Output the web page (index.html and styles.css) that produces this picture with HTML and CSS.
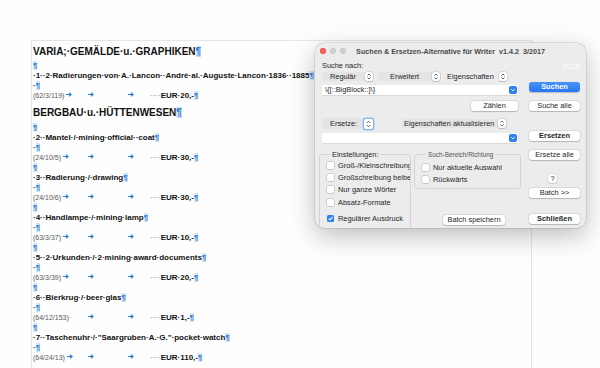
FILE: index.html
```html
<!DOCTYPE html>
<html lang="de">
<head>
<meta charset="utf-8">
<title>Suchen &amp; Ersetzen</title>
<link rel="stylesheet" href="styles.css">
</head>
<body>
<svg class="defs" width="0" height="0" aria-hidden="true">
  <symbol id="ar" viewBox="0 0 6 5"><path d="M0 2.5H4.6M3 0.7L5.2 2.5L3 4.3" fill="none" stroke="#2f7fd8" stroke-width="1.1"/></symbol>
  <symbol id="step" viewBox="0 0 8 9"><path d="M2.4 3.6L4 2L5.6 3.6M2.4 5.4L4 7L5.6 5.4" fill="none" stroke="#444" stroke-width="0.8"/></symbol>
  <symbol id="down" viewBox="0 0 8 8"><path d="M2.3 3.2L4 4.9L5.7 3.2" fill="none" stroke="#fff" stroke-width="1"/></symbol>
  <symbol id="chk" viewBox="0 0 7 7"><path d="M1.6 3.6L3 5L5.5 1.9" fill="none" stroke="#fff" stroke-width="1.1"/></symbol>
</svg>

<div class="page">
  <p class="h">VARIA;·GEMÄLDE·u.·GRAPHIKEN<span class="p">¶</span></p>
  <p class="l"><span class="p">¶</span></p>
  <p class="l b">·1··2·Radierungen·von·A.·Lancon··André·al.·Auguste·Lancon·1836··1885<span class="p">¶</span></p>
  <p class="l b">·<span class="p">¶</span></p>
  <p class="l b"><span class="t1"><span class="ref">(62/3/119)</span><svg class="ar"><use href="#ar"/></svg></span><span class="t2"><svg class="ar"><use href="#ar"/></svg></span><span class="t3"><svg class="ar"><use href="#ar"/></svg></span><span class="dots">····</span>EUR·20,-<span class="p">¶</span></p>

  <p class="h h2">BERGBAU·u.·HÜTTENWESEN<span class="p">¶</span></p>
  <p class="l"><span class="p">¶</span></p>
  <p class="l b">·2··Mantel·/·mining·official··coat<span class="p">¶</span></p>
  <p class="l b">·<span class="p">¶</span></p>
  <p class="l b"><span class="t1"><span class="ref">(24/10/5)</span><svg class="ar"><use href="#ar"/></svg></span><span class="t2"><svg class="ar"><use href="#ar"/></svg></span><span class="t3"><svg class="ar"><use href="#ar"/></svg></span><span class="dots">····</span>EUR·30,-<span class="p">¶</span></p>
  <p class="l"><span class="p">¶</span></p>
  <p class="l b">·3··Radierung·/·drawing<span class="p">¶</span></p>
  <p class="l b">·<span class="p">¶</span></p>
  <p class="l b"><span class="t1"><span class="ref">(24/10/6)</span><svg class="ar"><use href="#ar"/></svg></span><span class="t2"><svg class="ar"><use href="#ar"/></svg></span><span class="t3"><svg class="ar"><use href="#ar"/></svg></span><span class="dots">····</span>EUR·30,-<span class="p">¶</span></p>
  <p class="l"><span class="p">¶</span></p>
  <p class="l b">·4··Handlampe·/·mining·lamp<span class="p">¶</span></p>
  <p class="l b">·<span class="p">¶</span></p>
  <p class="l b"><span class="t1"><span class="ref">(63/3/37)</span><svg class="ar"><use href="#ar"/></svg></span><span class="t2"><svg class="ar"><use href="#ar"/></svg></span><span class="t3"><svg class="ar"><use href="#ar"/></svg></span><span class="dots">····</span>EUR·10,-<span class="p">¶</span></p>
  <p class="l"><span class="p">¶</span></p>
  <p class="l b">·5··2·Urkunden·/·2·mining·award·documents<span class="p">¶</span></p>
  <p class="l b">·<span class="p">¶</span></p>
  <p class="l b"><span class="t1"><span class="ref">(63/3/39)</span><svg class="ar"><use href="#ar"/></svg></span><span class="t2"><svg class="ar"><use href="#ar"/></svg></span><span class="t3"><svg class="ar"><use href="#ar"/></svg></span><span class="dots">····</span>EUR·20,-<span class="p">¶</span></p>
  <p class="l"><span class="p">¶</span></p>
  <p class="l b">·6··Bierkrug·/·beer·glas<span class="p">¶</span></p>
  <p class="l b">·<span class="p">¶</span></p>
  <p class="l b"><span class="t1"><span class="ref">(64/12/153)·</span></span><span class="t2"><svg class="ar"><use href="#ar"/></svg></span><span class="t3"><svg class="ar"><use href="#ar"/></svg></span><span class="dots">····</span>EUR·1,-<span class="p">¶</span></p>
  <p class="l"><span class="p">¶</span></p>
  <p class="l b">·7··Taschenuhr·/·"Saargruben·A.·G."·pocket·watch<span class="p">¶</span></p>
  <p class="l b">·<span class="p">¶</span></p>
  <p class="l b"><span class="t1"><span class="ref">(64/24/13)</span><svg class="ar"><use href="#ar"/></svg></span><span class="t2"><svg class="ar"><use href="#ar"/></svg></span><span class="t3"><svg class="ar"><use href="#ar"/></svg></span><span class="dots">····</span>EUR·110,-<span class="p">¶</span></p>
</div>

<div class="dialog">
  <div class="titlebar">
    <div class="lights"><i class="red"></i><i></i><i></i></div>
    <div class="title">Suchen &amp; Ersetzen-Alternative für Writer&nbsp; v1.4.2&nbsp; 3/2017</div>
  </div>
  <div class="body">
    <div class="left">
      <div class="lbl">Suche nach:</div>
      <div class="popups">
        <div class="popup p1"><span class="pt">Regulär</span><span class="st"><svg><use href="#step"/></svg></span></div>
        <div class="popup p2"><span class="pt">Erweitert</span><span class="st"><svg><use href="#step"/></svg></span></div>
        <div class="popup p3"><span class="pt">Eigenschaften</span><span class="st"><svg><use href="#step"/></svg></span></div>
      </div>
      <div class="field f1"><span class="ft">\{[::BigBlock::]\}</span><span class="dd"><svg><use href="#down"/></svg></span></div>
      <div class="rowend"><div class="btn zb">Zählen</div></div>
      <div class="erow">
        <div class="elabel">Ersetze:</div>
        <span class="st focus"><svg><use href="#step"/></svg></span>
        <div class="popup p4"><span class="pt">Eigenschaften aktualisieren</span><span class="st"><svg><use href="#step"/></svg></span></div>
      </div>
      <div class="field f2"><span class="ft"></span><span class="dd"><svg><use href="#down"/></svg></span></div>
      <div class="groups">
        <fieldset class="g1">
          <legend>Einstellungen:</legend>
          <div class="cr"><span class="cb"></span><span>Groß-/Kleinschreibung</span></div>
          <div class="cr"><span class="cb"></span><span>Großschreibung beibehalten</span></div>
          <div class="cr"><span class="cb"></span><span>Nur ganze Wörter</span></div>
          <div class="cr"><span class="cb"></span><span>Absatz-Formate</span></div>
          <div class="cr last"><span class="cb on"><svg><use href="#chk"/></svg></span><span>Regulärer Ausdruck</span></div>
        </fieldset>
        <div class="gcol">
          <fieldset class="g2">
            <legend>Such-Bereich/Richtung</legend>
            <div class="cr"><span class="cb"></span><span>Nur aktuelle Auswahl</span></div>
            <div class="cr"><span class="cb"></span><span>Rückwärts</span></div>
          </fieldset>
          <div class="btn bs">Batch speichern</div>
        </div>
      </div>
    </div>
    <div class="right">
      <div class="icu">(ICU)</div>
      <div class="btn primary b-such">Suchen</div>
      <div class="btn b-alle">Suche alle</div>
      <div class="btn bold b-ers">Ersetzen</div>
      <div class="btn b-ersa">Ersetze alle</div>
      <div class="btn q">?</div>
      <div class="btn b-batch">Batch &gt;&gt;</div>
      <div class="btn bold b-schl">Schließen</div>
    </div>
  </div>
</div>
</body>
</html>
```
FILE: styles.css
```css
html, body {
  margin: 0;
  padding: 0;
}
body {
  width: 600px;
  height: 368px;
  overflow: hidden;
  background: #fefefe;
  font-family: "Liberation Sans", Arial, sans-serif;
  color: #111;
  position: relative;
}
.defs {
  position: absolute;
  width: 0;
  height: 0;
}

/* ---------- document page ---------- */
.page {
  margin: 40px 0 0 31px;
  width: 498px;
  height: 323px;
  overflow: hidden;
  border: 1px solid #e6e6e6;
  border-bottom: none;
  padding: 4px 0 0 1px;
  box-sizing: content-box;
}
.page p {
  margin: 0;
  white-space: pre;
}
.h {
  font-size: 10px;
  line-height: 14px;
  font-weight: bold;
  margin-bottom: 2px !important;
}
.h2 {
  margin-top: 5px !important;
  margin-bottom: 2.5px !important;
}
.l {
  font-size: 8px;
  line-height: 10px;
  height: 10px;
  font-weight: bold;
}
.b {
  font-weight: bold;
}
.p {
  color: #2f7fd8;
  background: #d3e4f7;
}
.t1, .t2, .t3 {
  display: inline-block;
}
.t1 { width: 55px; }
.t2 { width: 40px; }
.t3 { width: 22px; }
.ref {
  font-size: 7px;
  font-weight: normal;
  color: #5a5a5a;
}
.ar {
  width: 6px;
  height: 5px;
  vertical-align: 1px;
}
.t1 .ar {
  margin-left: 2px;
}
.dots {
  color: #9fb2c9;
}

/* ---------- dialog ---------- */
.dialog {
  position: absolute;
  left: 315px;
  top: 43px;
  width: 271px;
  height: 185px;
  background: #ececec;
  border-radius: 9px;
  overflow: hidden;
  box-shadow: 0 0 0 0.5px rgba(0, 0, 0, 0.18), 0 8px 26px rgba(0, 0, 0, 0.26);
  font-size: 7.4px;
  color: #262626;
}
.titlebar {
  display: grid;
  height: 16px;
  align-items: center;
}
.lights, .title {
  grid-area: 1 / 1;
}
.lights {
  display: flex;
  gap: 4px;
  padding-left: 5px;
}
.lights i {
  width: 6px;
  height: 6px;
  border-radius: 50%;
  background: #d0d0d0;
  box-shadow: inset 0 0 0 0.5px rgba(0, 0, 0, 0.08);
}
.lights i.red {
  background: #fe5f57;
  box-shadow: inset 0 0 0 0.5px rgba(200, 40, 30, 0.4);
}
.title {
  text-align: center;
  font-weight: bold;
  font-size: 7.2px;
  color: #4a4a4a;
}
.body {
  display: flex;
  gap: 8px;
  padding: 0 6px;
}
.left {
  width: 200px;
  display: flex;
  flex-direction: column;
}
.right {
  width: 51px;
  display: flex;
  flex-direction: column;
}
.lbl {
  margin-top: 2px;
  height: 10px;
  line-height: 10px;
  padding-left: 1px;
}
.popups {
  margin-top: 1px;
  display: flex;
  height: 9px;
  padding-left: 1px;
}
.popup {
  display: flex;
  align-items: center;
  height: 9px;
  background: rgba(0, 0, 0, 0.03);
  border-radius: 3px;
}
.pt {
  flex: 1;
  line-height: 9px;
  white-space: nowrap;
}
.p1 { width: 52px; }
.p1 .pt { padding-left: 8px; }
.p2 { width: 63px; margin-left: 4px; }
.p2 .pt { padding-left: 12px; }
.p3 { width: 62px; margin-left: 5px; background: transparent; }
.p3 .pt { padding-left: 1px; }
.st {
  width: 8px;
  height: 9px;
  background: #fff;
  border-radius: 2px;
  box-shadow: 0 0 0 0.5px rgba(0, 0, 0, 0.14), 0 0.5px 1px rgba(0, 0, 0, 0.14);
  flex: none;
  display: block;
}
.st svg {
  width: 8px;
  height: 9px;
  display: block;
}
.popup .st {
  margin-right: 1px;
}
.field {
  margin-left: 1px;
  width: 196px;
  height: 10px;
  background: #fff;
  display: flex;
  align-items: center;
  box-shadow: 0 0.5px 0.5px rgba(0, 0, 0, 0.08);
}
.f1 { margin-top: 4px; }
.f2 { margin-top: 4px; }
.ft {
  flex: 1;
  padding-left: 3px;
  color: #222;
  line-height: 10px;
}
.dd {
  width: 8px;
  height: 8px;
  background: #2f7ff5;
  border-radius: 2px;
  margin-right: 1px;
  flex: none;
}
.dd svg {
  width: 8px;
  height: 8px;
  display: block;
}
.rowend {
  margin-top: 6px;
  display: flex;
  justify-content: flex-end;
  padding-right: 3px;
}
.erow {
  margin-top: 7px;
  display: flex;
  align-items: center;
  height: 11px;
}
.elabel {
  margin-left: 1px;
  width: 40px;
  height: 11px;
  line-height: 11px;
  background: rgba(0, 0, 0, 0.03);
  border-radius: 2px;
  padding-left: 8px;
  box-sizing: border-box;
}
.st.focus {
  margin-left: 2px;
  width: 9px;
  height: 10px;
  box-shadow: 0 0 0 1.5px #8ab6f2;
}
.st.focus svg {
  width: 9px;
  height: 10px;
}
.p4 {
  margin-left: 28px;
  width: 106px;
  height: 9px;
}
.p4 .pt {
  padding-left: 3px;
}
.groups {
  margin-top: 7px;
  display: flex;
  margin-left: -2px;
  gap: 3px;
}
fieldset {
  margin: 0;
  min-width: 0;
  border: 1px solid #d4d4d4;
  border-radius: 3px;
  box-sizing: border-box;
  overflow: hidden;
}
legend {
  padding: 0 2px;
  margin-left: 3px;
  line-height: 9px;
  height: 9px;
}
.g1 {
  width: 92px;
  height: 100px;
  padding: 0 0 0 7px;
}
.g2 {
  width: 107px;
  padding: 2px 0 2px 7px;
}
.g2 legend {
  font-size: 6.4px;
  color: #555;
  margin-left: 4px;
}
.cr {
  display: flex;
  align-items: center;
  gap: 4px;
  height: 12.4px;
  white-space: nowrap;
}
.cr.last {
  margin-top: 4px;
}
.cb {
  width: 7px;
  height: 7px;
  flex: none;
  background: #fff;
  border-radius: 1.5px;
  box-shadow: 0 0 0 0.5px rgba(0, 0, 0, 0.22), 0 0.5px 1px rgba(0, 0, 0, 0.1);
}
.cb.on {
  background: #2f7ff5;
  box-shadow: none;
}
.cb svg {
  width: 7px;
  height: 7px;
  display: block;
}
.gcol {
  display: flex;
  flex-direction: column;
}
.btn {
  height: 10px;
  width: 51px;
  background: #fff;
  border-radius: 3px;
  box-shadow: 0 0 0 0.5px rgba(0, 0, 0, 0.13), 0 0.5px 1px rgba(0, 0, 0, 0.18);
  text-align: center;
  line-height: 10px;
  white-space: nowrap;
  color: #262626;
  box-sizing: border-box;
}
.zb {
  width: 47px;
}
.bs {
  width: 62px;
  margin-top: 26px;
  margin-left: 29px;
}
.bold {
  font-weight: bold;
}
.primary {
  background: linear-gradient(#4b93f8, #2777f4);
  color: #fff;
  font-weight: bold;
  box-shadow: 0 0.5px 1px rgba(0, 0, 0, 0.2);
}
.icu {
  margin-top: 3px;
  height: 9px;
  line-height: 9px;
  text-align: right;
  color: #fafafa;
  font-weight: bold;
}
.b-such { margin-top: 11px; }
.b-alle { margin-top: 9px; }
.b-ers { margin-top: 20px; }
.b-ersa { margin-top: 9px; }
.q {
  margin-top: 14px;
  width: 9px;
  height: 9px;
  line-height: 9px;
  margin-left: 19px;
}
.b-batch { margin-top: 5px; }
.b-schl { margin-top: 16px; }
```
